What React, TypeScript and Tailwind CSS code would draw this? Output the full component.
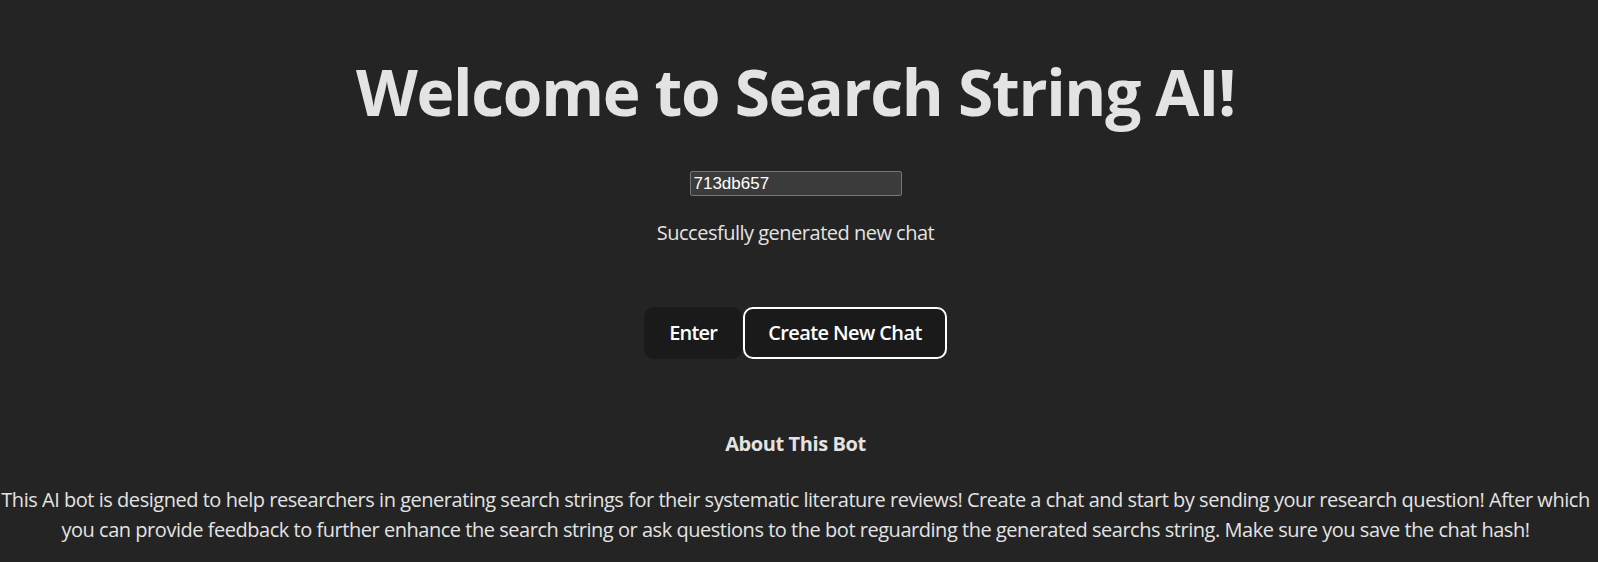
import React from "react";

export default function App() {
  return (
    <div
      className="min-h-screen w-full bg-[#242424] text-[#e3e3e3] text-center"
      style={{ fontFamily: '"Open Sans", "Noto Sans", sans-serif' }}
    >
      <div className="w-[1591px] flex flex-col items-center">
        <h1 className="mt-[57px] text-[64px] font-bold leading-[1.1] tracking-[-1.3px] text-[#e3e3e3]">
          Welcome to Search String AI!
        </h1>
        <input
          readOnly
          value="713db657"
          className="mt-[44px] w-[212px] h-[25px] bg-[#3b3b3b] border border-[#767676] rounded-[2px] px-[3px] text-[17px] text-white outline-none"
          style={{ fontFamily: '"Liberation Sans", Arial, sans-serif' }}
        />
        <p className="mt-[22px] text-[20px] leading-[30px] tracking-[-0.5px]">Succesfully generated new chat</p>
        <div className="mt-[59px] flex gap-px">
          <button className="h-[52px] px-[24px] rounded-[10px] bg-[#1a1a1a] border border-transparent text-[20px] font-semibold tracking-[-0.8px] text-white">
            Enter
          </button>
          <button className="h-[52px] px-[23px] rounded-[10px] bg-[#1a1a1a] border-2 border-white text-[20px] font-semibold tracking-[-0.6px] text-white">
            Create New Chat
          </button>
        </div>
        <h3 className="mt-[70px] text-[20px] leading-[30px] font-bold tracking-[-0.4px]">About This Bot</h3>
        <p className="mt-[26px] text-[20px] leading-[29.5px] tracking-[-0.47px]">
          This AI bot is designed to help researchers in generating search strings for their systematic literature reviews! Create a chat and start by sending your research question! After which you can provide feedback to further enhance the search string or ask questions to the bot reguarding the generated searchs string. Make sure you save the chat hash!
        </p>
      </div>
    </div>
  );
}
